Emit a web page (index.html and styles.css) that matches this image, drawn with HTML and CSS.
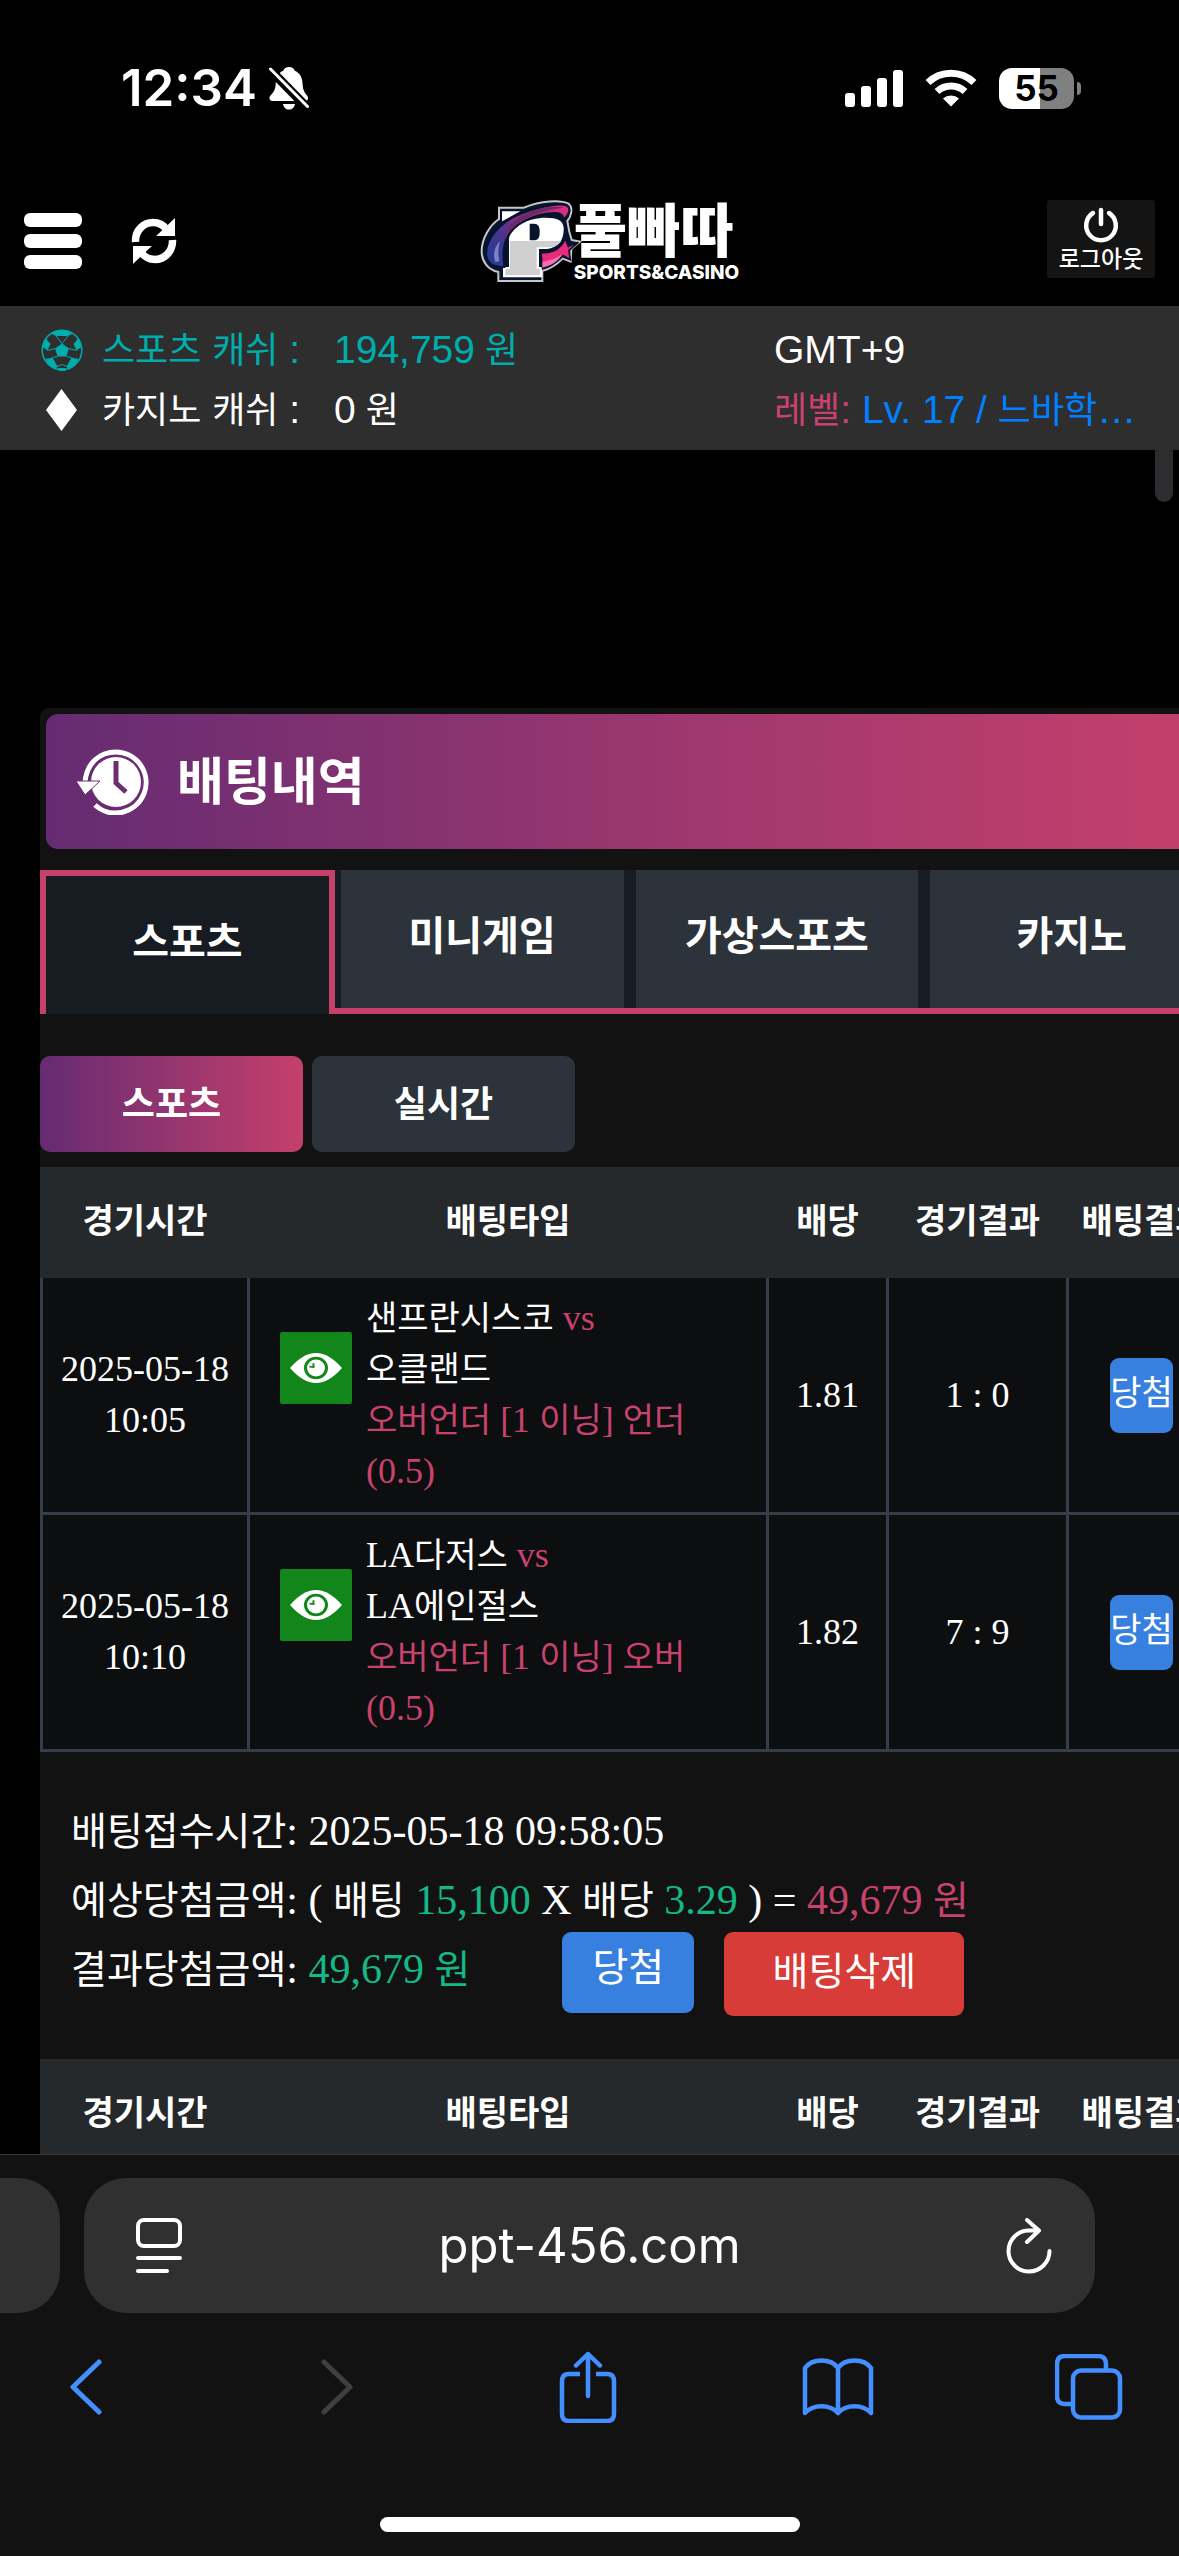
FILE: index.html
```html
<!DOCTYPE html>
<html lang="ko">
<head>
<meta charset="utf-8">
<meta name="viewport" content="width=device-width, initial-scale=1">
<title>배팅내역</title>
<link rel="stylesheet" href="styles.css">
</head>
<body>
<div class="status">
  <div class="status-left">
    <span class="clock">12:34</span>
    <svg class="bell" width="40" height="44" viewBox="0 0 40 44" aria-hidden="true">
      <path d="M20 1c3 0 5 1.500 5.500 3.500C31 7 33 11 33.500 17c.3 6 1.500 9 4.500 12.500 2 2.500 1 5.500-2 5.500H3.500c-3 0-4-3-2-5.500C5 26 6.500 23 6.800 17 7.200 11 9 7 14.500 4.500 15 2.500 17 1 20 1zM14 38h12c-.5 3.500-3 5.500-6 5.500S14.500 41.500 14 38z" fill="#fff"/>
      <path d="M-1 1.500L38.500 42" stroke="#000" stroke-width="9"/>
      <path d="M1.500 3L38.500 40.500" stroke="#fff" stroke-width="3" stroke-linecap="round"/>
    </svg>
  </div>
  <div class="status-right">
    <svg width="58" height="37" viewBox="0 0 58 37" fill="#fff" aria-hidden="true"><rect y="23" width="10" height="14" rx="3"/><rect x="16" y="16" width="10" height="21" rx="3"/><rect x="32" y="8" width="10" height="29" rx="3"/><rect x="48" width="10" height="37" rx="3"/></svg>
    <svg width="52" height="38" viewBox="0 0 52 38" aria-hidden="true"><g fill="none" stroke="#fff" stroke-width="7"><path d="M3 13.500a33 33 0 0 1 46 0"/><path d="M12 22.500a20.500 20.500 0 0 1 28 0"/></g><path d="M18 29.500a12 12 0 0 1 16 0L26 37.500z" fill="#fff"/></svg>
    <div class="battery"><span>55</span></div>
  </div>
</div>

<header class="top">
  <button class="icon-btn" aria-label="메뉴"><svg width="58" height="56" viewBox="0 0 58 56" fill="#fff"><rect width="58" height="14" rx="6"/><rect y="21" width="58" height="14" rx="6"/><rect y="42" width="58" height="14" rx="6"/></svg></button>
  <button class="icon-btn refresh" aria-label="새로고침"><svg width="46" height="46" viewBox="0 0 46 46"><g fill="none" stroke="#fff" stroke-width="7.500"><path d="M4.500 24C4 12 13 4.500 22 4.500c6 0 10 2 14 7"/><path d="M41.500 22C42 34 33 41.500 24 41.500c-6 0-10-2-14-7"/></g><path d="M44 0v18H25l7-6.500zM2 46V28h19l-7 6.500z" fill="#fff"/></svg></button>
  <a class="logo" href="#" aria-label="풀빠따">
    <svg width="104" height="84" viewBox="58 58 312 252" aria-hidden="true">
      <defs>
        <linearGradient id="brim" x1="0" y1="1" x2="1" y2="0"><stop offset="0" stop-color="#203a9c"/><stop offset=".35" stop-color="#46358c"/><stop offset=".65" stop-color="#8f3188"/><stop offset="1" stop-color="#f52a7e"/></linearGradient>
      </defs>
      <path d="M118 84h75c50-22 110-24 134-12 14 12 8 38-4 52l6 32 7 25 25 5-26 22-2 38-24-9c-18 18-40 32-61 37v30H116v-27c-30-7-50-30-50-62 0-38 24-78 52-97z" fill="#06142e" stroke="#c6c6c8" stroke-width="6"/>
      <path d="M127 95h55l-55 30z" fill="#fff"/>
      <path d="M148 176c8-34 55-62 110-62 35 0 52 8 54 30 2 34-14 60-50 64h-24v54h9v31H130v-31h18z" fill="#fff"/>
      <path d="M151 184h154c-10 14-24 19-43 19h-31v64h10v20H137v-20h14z" fill="#cfcfd0"/>
      <path d="M210 132h12c14 0 18 8 18 25s-4 25-18 25h-12z" fill="#06142e"/>
      <path d="M244 220c32 0 46-8 60-22l14-20 8 22 30-12-28 24 4 28-22-12c-20 22-40 32-62 36z" fill="#e82a7b" stroke="#06142e" stroke-width="5"/>
      <path d="M248 246c24-4 42-10 60-22-12 22-34 34-60 40z" fill="#f66fac"/>
      <path d="M80 230c-6-44 34-96 90-122 52-24 124-40 152-30 14 10 6 30-12 42 2-12-6-20-24-20-26 0-60 8-88 22-40 20-62 50-66 88-2 20 0 36 2 52-30 0-50-10-54-32z" fill="url(#brim)" stroke="#06142e" stroke-width="6"/>
      <path d="M190 106c40-18 86-30 124-22-30 2-78 14-106 28-50 26-66 50-74 74 2-32 20-60 56-80z" fill="#6d2866"/>
      <path d="M107 248c-8-20-4-46 14-64-6 22-6 40-2 60z" fill="#7a82c6"/>
    </svg>
    <span class="wordmark"><span class="name">풀빠따</span><span class="tag">SPORTS&amp;CASINO</span></span>
  </a>
  <button class="logout"><svg width="36" height="36" viewBox="0 0 36 36" fill="none" stroke="#fff" stroke-width="4.500" stroke-linecap="round" aria-hidden="true"><path d="M18 3v14M10 6a14.800 14.800 0 1 0 16 0"/></svg>로그아웃</button>
</header>

<section class="account">
  <svg class="teal" width="42" height="44" viewBox="0 0 42 44" aria-hidden="true"><circle cx="21" cy="22" r="19.800" fill="none" stroke="currentColor" stroke-width="1.500"/><g fill="currentColor"><path d="M21 15.500l7 5-2.600 8h-8.800L14 20.500zM10 5.500L15 2.500h12l5 3-5 2.500H15zM1.500 19l3-9 5 6-3 6.500zM40.500 19l-3-9-5 6 3 6.500zM4.500 31l7-1.500 5 9-2 3c-5-2-8-6-10-10.500zM37.500 31l-7-1.500-5 9 2 3c5-2 8-6 10-10.500zM17 40h8l-1 3h-6z"/></g><path d="M21 15.500L15 8M14 20.500l-7.500 2M28 20.500l7.500 2M25.400 28.500l5.100 1M16.600 28.500l-5.100 1M21 15.500L27 8M16 38.500l5-2 5 2" fill="none" stroke="currentColor"/></svg>
  <span class="teal">스포츠<span class="lat"> </span>캐쉬<span class="lat"> :</span></span>
  <span class="teal"><span class="lat">194,759</span> 원</span>
  <span class="lat">GMT+9</span>
  <svg class="gem" width="31" height="42" viewBox="0 0 31 42" aria-hidden="true"><path d="M15.500 0L31 21 15.500 42 0 21z" fill="#fff"/></svg>
  <span>카지노<span class="lat"> </span>캐쉬<span class="lat"> :</span></span>
  <span><span class="lat">0</span> 원</span>
  <span class="level"><span class="pink">레벨<span class="lat">: </span></span><a href="#"><span class="lat">Lv. 17 / </span>느바학<span class="lat">…</span></a></span>
</section>

<main class="view">
  <div class="scroll-thumb"></div>
  <div class="panel">
    <div class="banner">
      <svg width="74" height="66" viewBox="0 0 74 66" aria-hidden="true"><circle cx="40" cy="33" r="25" fill="#fff"/><path d="M40 12v22l10 9" fill="none" stroke="#6d2d73" stroke-width="5"/><path d="M9 34C10 14 24 3 40 3a30.500 30.500 0 1 1-21 53" fill="none" stroke="#fff" stroke-width="5"/><path d="M0 32h24L9 46z" fill="#fff" stroke="#6d2d73"/></svg>
      <h1>배팅내역</h1>
    </div>
    <nav class="tabs"><a class="tab on" href="#">스포츠</a><a class="tab" href="#">미니게임</a><a class="tab" href="#">가상스포츠</a><a class="tab" href="#">카지노</a></nav>
    <div class="subtabs"><button class="on">스포츠</button><button>실시간</button></div>

    <table class="bets">
      <colgroup><col class="c-time"><col class="c-type"><col class="c-odds"><col class="c-score"><col></colgroup>
      <thead><tr><th>경기시간</th><th>배팅타입</th><th>배당</th><th>경기결과</th><th>배팅결과</th></tr></thead>
      <tbody>
        <tr>
          <td>2025-05-18<br>10:05</td>
          <td><div class="pick">
            <button class="eye" aria-label="보기"><svg width="52" height="30" viewBox="0 0 52 32" preserveAspectRatio="none"><path d="M0 16C8 6 17 0 26 0s18 6 26 16c-8 10-17 16-26 16S8 26 0 16z" fill="#fff"/><circle cx="26" cy="16" r="10.500" fill="#fff" stroke="#12851b" stroke-width="3"/><path d="M19.500 14.500l4 .5v-4" fill="none" stroke="#12851b" stroke-width="2"/></svg></button>
            <div><span class="ko">샌프란시스코</span> <span class="pink">vs</span><br><span class="ko">오클랜드</span><br><span class="pink"><span class="ko">오버언더</span> [1 <span class="ko">이닝</span>] <span class="ko">언더</span><br>(0.5)</span></div>
          </div></td>
          <td>1.81</td><td>1 : 0</td><td><span class="win ko">당첨</span></td>
        </tr>
        <tr>
          <td>2025-05-18<br>10:10</td>
          <td><div class="pick">
            <button class="eye" aria-label="보기"><svg width="52" height="30" viewBox="0 0 52 32" preserveAspectRatio="none"><path d="M0 16C8 6 17 0 26 0s18 6 26 16c-8 10-17 16-26 16S8 26 0 16z" fill="#fff"/><circle cx="26" cy="16" r="10.500" fill="#fff" stroke="#12851b" stroke-width="3"/><path d="M19.500 14.500l4 .5v-4" fill="none" stroke="#12851b" stroke-width="2"/></svg></button>
            <div>LA<span class="ko">다저스</span> <span class="pink">vs</span><br>LA<span class="ko">에인절스</span><br><span class="pink"><span class="ko">오버언더</span> [1 <span class="ko">이닝</span>] <span class="ko">오버</span><br>(0.5)</span></div>
          </div></td>
          <td>1.82</td><td>7 : 9</td><td><span class="win ko">당첨</span></td>
        </tr>
      </tbody>
    </table>

    <div class="summary">
      <p><span class="ko">배팅접수시간</span>: 2025-05-18 09:58:05</p>
      <p><span class="ko">예상당첨금액</span>: ( <span class="ko">배팅</span> <span class="green">15,100</span> X <span class="ko">배당</span> <span class="green">3.29</span> ) = <span class="pink">49,679 <span class="ko">원</span></span></p>
      <div class="result">
        <p><span class="ko">결과당첨금액</span>: <span class="green">49,679 <span class="ko">원</span></span></p>
        <span class="won ko">당첨</span>
        <button class="delete ko">배팅삭제</button>
      </div>
    </div>

    <table class="bets">
      <colgroup><col class="c-time"><col class="c-type"><col class="c-odds"><col class="c-score"><col></colgroup>
      <thead><tr><th>경기시간</th><th>배팅타입</th><th>배당</th><th>경기결과</th><th>배팅결과</th></tr></thead>
    </table>
  </div>
</main>

<footer class="browser">
  <div class="address-row">
    <div class="prev-tab"></div>
    <div class="address">
      <button class="icon-btn" aria-label="페이지 설정"><svg width="46" height="56" viewBox="0 0 46 56" fill="none" stroke="#fff" stroke-width="4" stroke-linecap="round"><rect x="2" y="2" width="42" height="26" rx="6"/><path d="M2 40h42M2 53h29"/></svg></button>
      <a class="url" href="#">ppt-456.com</a>
      <button class="icon-btn" aria-label="새로고침"><svg width="46" height="56" viewBox="0 0 46 56" fill="none" stroke="#fff" stroke-width="4" stroke-linecap="round" stroke-linejoin="round"><path d="M43.500 33A20.500 20.500 0 1 1 23 12.500h10M21 2L33 12.500 21 24"/></svg></button>
    </div>
  </div>
  <div class="toolbar">
    <button class="icon-btn" aria-label="뒤로"><svg width="34" height="56" viewBox="0 0 34 56" fill="none" stroke="#448fff" stroke-width="5" stroke-linecap="round" stroke-linejoin="round"><path d="M30 3L4 28l26 25"/></svg></button>
    <button class="icon-btn" aria-label="앞으로" disabled><svg width="34" height="56" viewBox="0 0 34 56" fill="none" stroke="#3f3f3f" stroke-width="5" stroke-linecap="round" stroke-linejoin="round"><path d="M4 3l26 25L4 53"/></svg></button>
    <button class="icon-btn" aria-label="공유"><svg width="58" height="72" viewBox="0 0 58 72" fill="none" stroke="#448fff" stroke-width="4.500" stroke-linecap="round" stroke-linejoin="round"><path d="M29 45V3M17 14.500L29 3l12 11.500"/><path d="M21 23H10q-7 0-7 7v33q0 7 7 7h38q7 0 7-7V30q0-7-7-7H37" stroke-linecap="butt"/></svg></button>
    <button class="icon-btn" aria-label="책갈피"><svg width="72" height="60" viewBox="0 0 72 60" fill="none" stroke="#448fff" stroke-width="4.500" stroke-linecap="round" stroke-linejoin="round"><path d="M36 11C29 1 10 1 3 11v45c8-9 25-9 33 0 8-9 25-9 33 0V11C62 1 43 1 36 11zv45"/></svg></button>
    <button class="icon-btn" aria-label="탭"><svg width="68" height="66" viewBox="0 0 68 66" fill="none" stroke="#448fff" stroke-width="4.500"><rect x="18" y="16.500" width="47" height="47" rx="8"/><path d="M51 16v-6q0-8-8-8H10q-8 0-8 8v32q0 8 8 8h8"/></svg></button>
  </div>
  <div class="home-bar"></div>
</footer>
</body>
</html>
```
FILE: styles.css
```css
* { box-sizing: border-box; }
body {
  margin: 0;
  height: 100vh;
  display: flex;
  flex-direction: column;
  overflow: hidden;
  background: #000;
  color: #fff;
  font-family: "Noto Sans CJK KR", sans-serif;
}
button { font: inherit; color: inherit; border: 0; padding: 0; background: none; cursor: pointer; }
a { color: inherit; text-decoration: none; }
p, h1 { margin: 0; }
svg { display: block; flex: none; }
.icon-btn { flex: none; }
.pink { color: #c8426e; }
.green { color: #14b886; }
.teal { color: #00adad; }

/* status bar */
.status {
  flex: none;
  height: 176px;
  display: flex;
  align-items: center;
  justify-content: space-between;
  padding: 0 105px 0 121px;
  font-family: Inter, sans-serif;
}
.status-left, .status-right { display: flex; align-items: center; }
.status-left { gap: 12px; }
.status-right { gap: 22px; }
.clock { font-size: 51px; font-weight: 600; line-height: 60px; }
.battery {
  position: relative;
  width: 75px;
  height: 41px;
  border-radius: 13px;
  background: linear-gradient(90deg, #fff 55%, #808080 55%);
  color: #000;
  font-size: 35px;
  font-weight: 700;
  line-height: 41px;
  text-align: center;
}
.battery::after {
  content: "";
  position: absolute;
  left: 78px;
  top: 14px;
  width: 4px;
  height: 13px;
  border-radius: 0 4px 4px 0;
  background: #808080;
}

/* site header */
.top {
  flex: none;
  height: 130px;
  display: flex;
  align-items: center;
  padding: 0 24px;
}
.refresh { margin-left: 49px; }
.logo { display: flex; align-items: center; margin: 0 auto; padding-right: 6px; }
.wordmark { display: flex; flex-direction: column; margin-left: -9px; }
.name { font-size: 58px; font-weight: 900; line-height: 56px; }
.tag { margin-top: 8px; font-family: Inter, sans-serif; font-size: 19px; font-weight: 800; line-height: 20px; }
.logout {
  width: 108px;
  height: 78px;
  margin-bottom: 4px;
  display: flex;
  flex-direction: column;
  align-items: center;
  justify-content: center;
  background: #141414;
  border-radius: 3px;
  font-size: 23px;
  font-weight: 500;
  line-height: 28px;
}

/* balances */
.account {
  flex: none;
  display: grid;
  grid-template-columns: 61px 232px 440px minmax(0, 1fr);
  grid-auto-rows: 60px;
  align-items: center;
  padding: 14px 40px 10px 41px;
  background: #2e2e2e;
  font-family: "Liberation Sans", "Noto Sans CJK KR", sans-serif;
  font-size: 36px;
  line-height: 60px;
  white-space: pre;
}
.gem { margin-left: 5px; }
.lat { font-size: 39px; }
.level { overflow: hidden; text-overflow: ellipsis; }
.level a { color: #0080ff; }

/* scrolled page */
.view { flex: 1; min-height: 0; position: relative; overflow: hidden; }
.scroll-thumb {
  position: absolute;
  top: 0;
  right: 6px;
  width: 18px;
  height: 52px;
  border-radius: 0 0 9px 9px;
  background: #2c2d2f;
}
.panel {
  width: 100%;
  margin: 258px 0 0 40px;
  background: #121212;
  border-radius: 9px 9px 0 0;
  padding-top: 6px;
}
.banner {
  display: flex;
  align-items: center;
  gap: 27px;
  height: 135px;
  margin: 0 6px 21px;
  padding-left: 30px;
  border-radius: 12px;
  background: linear-gradient(90deg, #652b72, #a83a6e 65%, #c5406b);
}
.banner h1 { padding-bottom: 7px; font-size: 51px; font-weight: 700; line-height: 60px; }

.tabs {
  display: grid;
  grid-template-columns: repeat(4, 1fr);
  background: #171b22;
  box-shadow: inset 0 -6px #c5406b;
}
.tab {
  height: 138px;
  border: solid #171b22;
  border-width: 0 6px;
  background: #2c333a;
  font-size: 40px;
  font-weight: 700;
  line-height: 126px;
  text-align: center;
}
.tab.on { height: 144px; border: 6px solid #c5406b; border-bottom: 0; background: #171b22; }

.subtabs { display: flex; gap: 9px; padding: 42px 0 15px; }
.subtabs button {
  width: 263px;
  height: 96px;
  padding-bottom: 7px;
  border-radius: 10px;
  background: #2c333a;
  font-size: 36px;
  font-weight: 700;
}
.subtabs .on { background: linear-gradient(90deg, #652b72, #c5406b); }

/* bets */
.bets { width: 100%; table-layout: fixed; border-collapse: separate; border-spacing: 0; }
.c-time { width: 207px; }
.c-type { width: 519px; }
.c-odds { width: 120px; }
.c-score { width: 180px; }
.bets th {
  height: 111px;
  padding: 0 0 9px 3px;
  background: #25292c;
  font-size: 34px;
  font-weight: 700;
}
.bets td {
  height: 237px;
  padding: 0;
  border: solid #353e48;
  border-width: 0 0 3px 3px;
  background: #0d0e10;
  text-align: center;
}
.bets td:last-child { padding-right: 5px; }
.bets td, .summary { font-family: "Liberation Serif", "Noto Sans CJK KR", serif; }
.bets td { font-size: 36px; line-height: 51px; }
.bets .ko { font-size: 34px; }
.pick { display: flex; gap: 14px; padding: 0 60px 0 30px; text-align: left; }
.eye {
  flex: none;
  width: 72px;
  height: 72px;
  margin-top: 39px;
  display: grid;
  place-items: center;
  border-radius: 2px;
  background: #12851b;
}
.win {
  display: inline-block;
  width: 63px;
  height: 75px;
  padding-top: 10px;
  border-radius: 9px;
  background: #3880df;
  vertical-align: middle;
}

.summary { padding: 45px 31px 43px; font-size: 42px; line-height: 69px; }
.summary .ko { font-size: 39px; }
.result { display: flex; align-items: flex-start; margin-top: -3px; }
.result p { padding-top: 3px; }
.won, .delete { border-radius: 9px; text-align: center; }
.won { width: 132px; height: 81px; margin: 0 30px 0 92px; background: #3880df; line-height: 72px; }
.delete { width: 240px; height: 84px; padding-bottom: 6px; background: #d83c38; }

/* browser chrome */
.browser {
  flex: none;
  display: flex;
  flex-direction: column;
  border-top: 1px solid #383838;
  background: #121212;
  padding: 23px 0 24px;
}
.address-row { display: flex; gap: 24px; padding-right: 84px; }
.prev-tab { width: 60px; border-radius: 0 42px 42px 0; background: #303030; }
.address {
  flex: 1;
  height: 135px;
  display: flex;
  align-items: center;
  padding: 0 43px 0 52px;
  border-radius: 42px;
  background: #303030;
  font-family: Inter, sans-serif;
  font-size: 49px;
}
.url { flex: 1; padding-right: 9px; text-align: center; }
.toolbar {
  display: flex;
  align-items: center;
  justify-content: space-between;
  height: 148px;
  padding: 0 54px 0 50px;
}
.toolbar .icon-btn { width: 72px; display: grid; place-items: center; }
.home-bar { align-self: center; width: 420px; height: 15px; margin-top: 56px; border-radius: 8px; background: #fff; }
```
